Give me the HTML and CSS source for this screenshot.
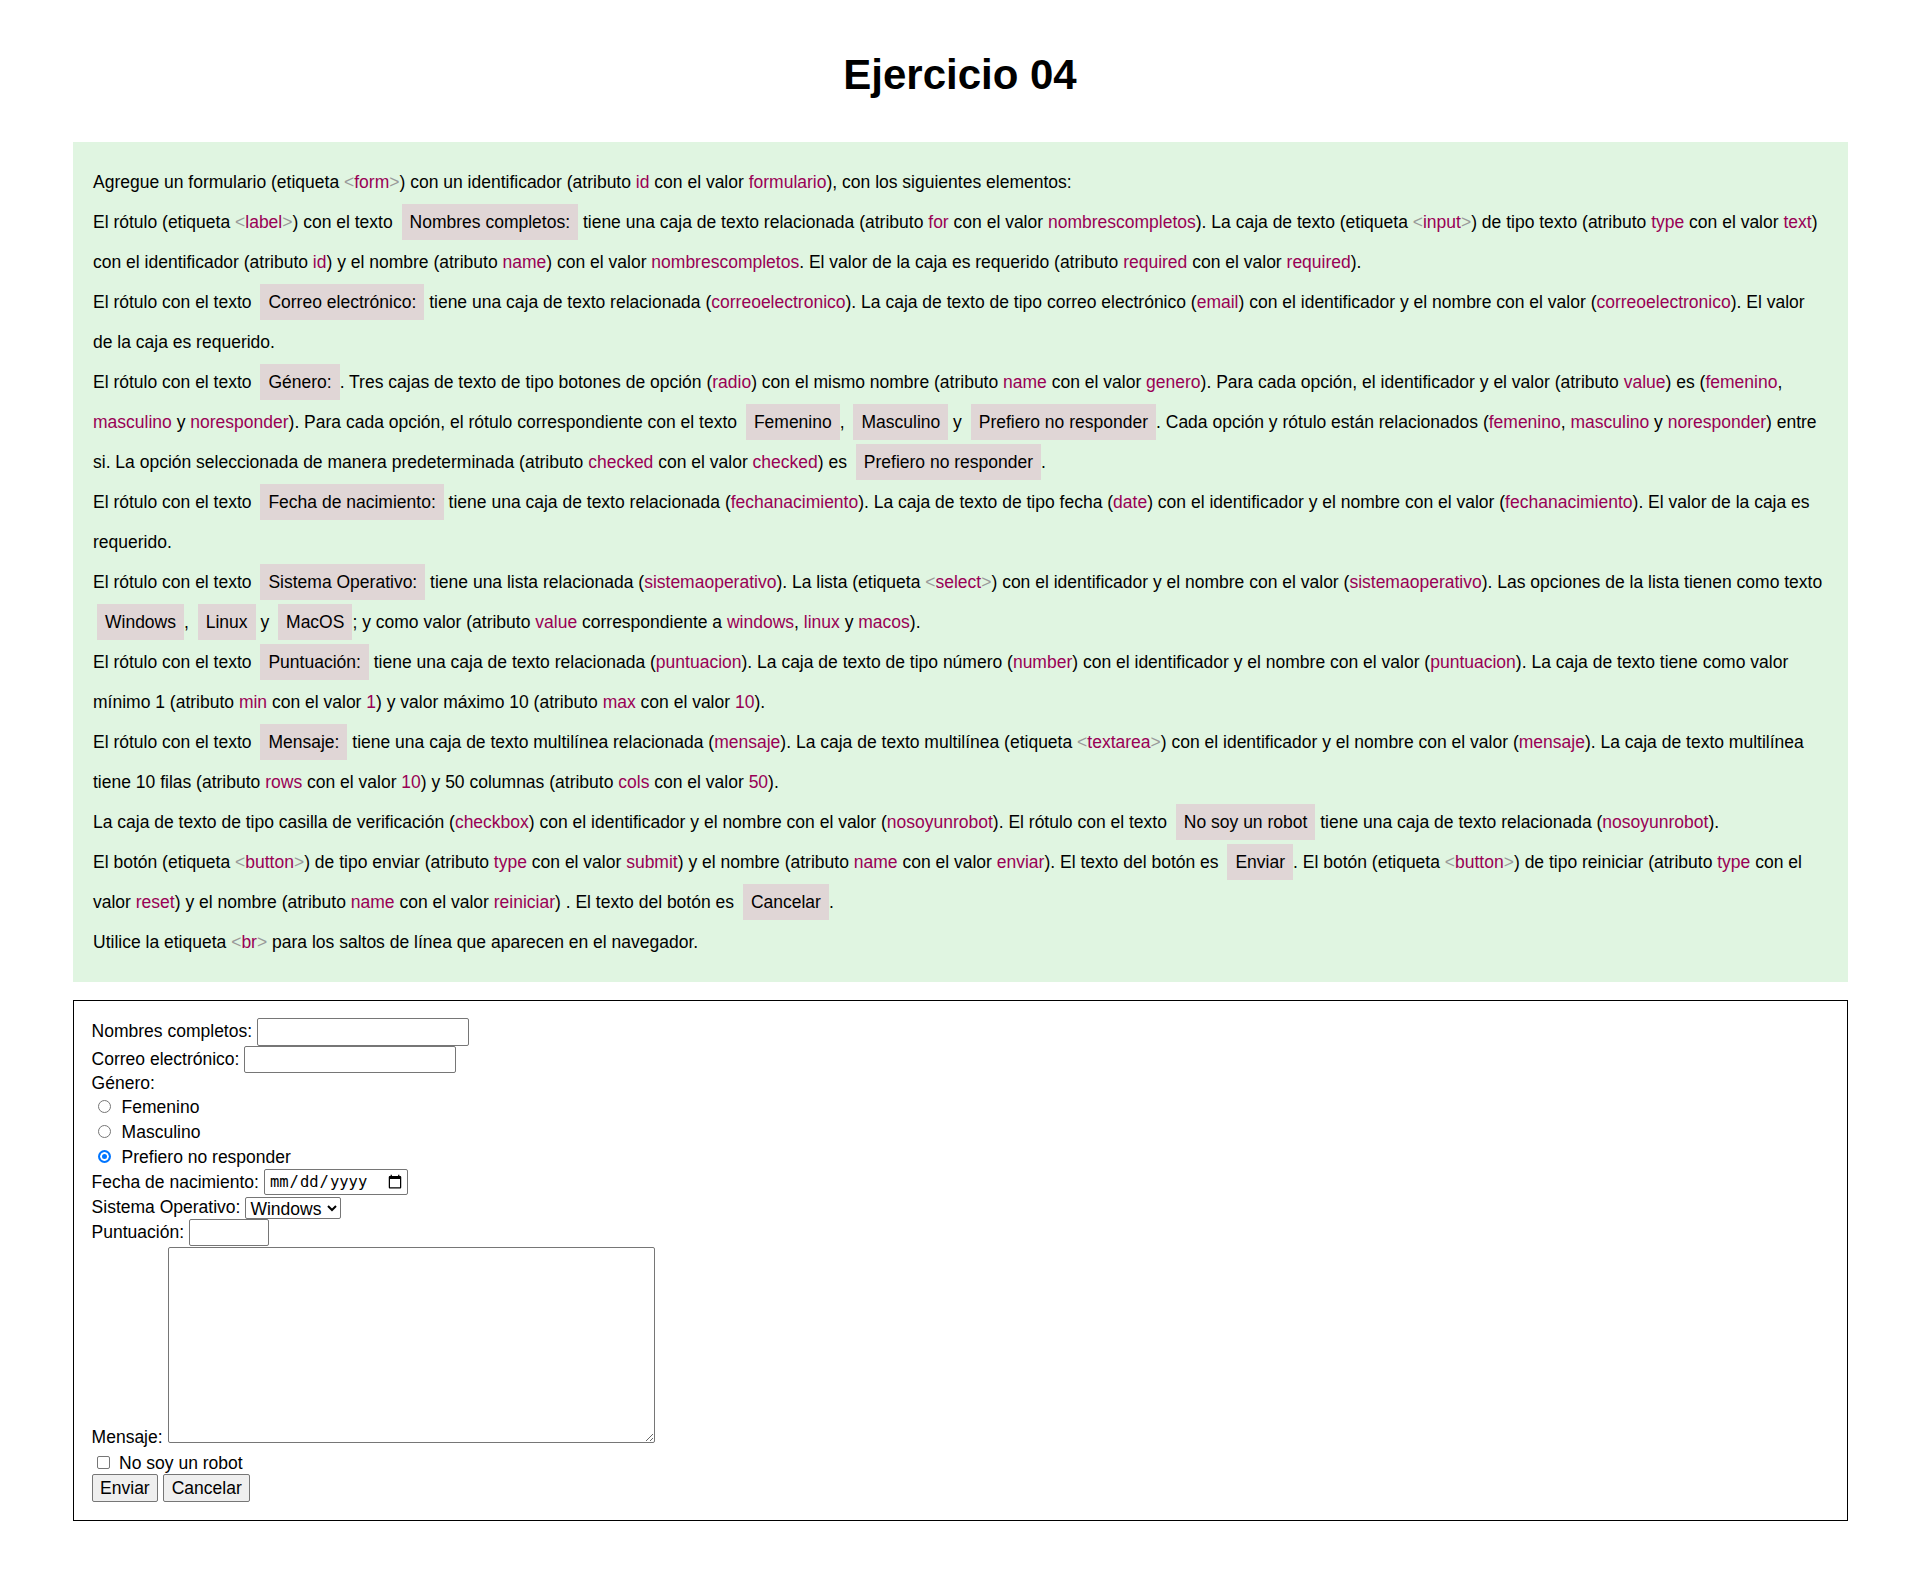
FILE: index.html
```html
<!DOCTYPE html>
<html lang="es">
<head>
<meta charset="utf-8">
<title>Ejercicio 04</title>
<link rel="stylesheet" href="styles.css">
</head>
<body>
<h1 class="title">Ejercicio 04</h1>
<div class="wrap">
  <section class="enunciado">
    <p>Agregue un formulario (etiqueta <span class="p">&lt;</span><span class="k">form</span><span class="p">&gt;</span>) con un identificador (atributo <span class="k">id</span> con el valor <span class="k">formulario</span>), con los siguientes elementos:</p>
    <p>El rótulo (etiqueta <span class="p">&lt;</span><span class="k">label</span><span class="p">&gt;</span>) con el texto <span class="box">Nombres completos:</span> tiene una caja de texto relacionada (atributo <span class="k">for</span> con el valor <span class="k">nombrescompletos</span>). La caja de texto (etiqueta <span class="p">&lt;</span><span class="k">input</span><span class="p">&gt;</span>) de tipo texto (atributo <span class="k">type</span> con el valor <span class="k">text</span>) con el identificador (atributo <span class="k">id</span>) y el nombre (atributo <span class="k">name</span>) con el valor <span class="k">nombrescompletos</span>. El valor de la caja es requerido (atributo <span class="k">required</span> con el valor <span class="k">required</span>).</p>
    <p>El rótulo con el texto <span class="box">Correo electrónico:</span> tiene una caja de texto relacionada (<span class="k">correoelectronico</span>). La caja de texto de tipo correo electrónico (<span class="k">email</span>) con el identificador y el nombre con el valor (<span class="k">correoelectronico</span>). El valor de la caja es requerido.</p>
    <p>El rótulo con el texto <span class="box">Género:</span>. Tres cajas de texto de tipo botones de opción (<span class="k">radio</span>) con el mismo nombre (atributo <span class="k">name</span> con el valor <span class="k">genero</span>). Para cada opción, el identificador y el valor (atributo <span class="k">value</span>) es (<span class="k">femenino</span>, <span class="k">masculino</span> y <span class="k">noresponder</span>). Para cada opción, el rótulo correspondiente con el texto <span class="box">Femenino</span>, <span class="box">Masculino</span> y <span class="box">Prefiero no responder</span>. Cada opción y rótulo están relacionados (<span class="k">femenino</span>, <span class="k">masculino</span> y <span class="k">noresponder</span>) entre si. La opción seleccionada de manera predeterminada (atributo <span class="k">checked</span> con el valor <span class="k">checked</span>) es <span class="box">Prefiero no responder</span>.</p>
    <p>El rótulo con el texto <span class="box">Fecha de nacimiento:</span> tiene una caja de texto relacionada (<span class="k">fechanacimiento</span>). La caja de texto de tipo fecha (<span class="k">date</span>) con el identificador y el nombre con el valor (<span class="k">fechanacimiento</span>). El valor de la caja es requerido.</p>
    <p>El rótulo con el texto <span class="box">Sistema Operativo:</span> tiene una lista relacionada (<span class="k">sistemaoperativo</span>). La lista (etiqueta <span class="p">&lt;</span><span class="k">select</span><span class="p">&gt;</span>) con el identificador y el nombre con el valor (<span class="k">sistemaoperativo</span>). Las opciones de la lista tienen como texto <span class="box">Windows</span>, <span class="box">Linux</span> y <span class="box">MacOS</span>; y como valor (atributo <span class="k">value</span> correspondiente a <span class="k">windows</span>, <span class="k">linux</span> y <span class="k">macos</span>).</p>
    <p>El rótulo con el texto <span class="box">Puntuación:</span> tiene una caja de texto relacionada (<span class="k">puntuacion</span>). La caja de texto de tipo número (<span class="k">number</span>) con el identificador y el nombre con el valor (<span class="k">puntuacion</span>). La caja de texto tiene como valor mínimo 1 (atributo <span class="k">min</span> con el valor <span class="k">1</span>) y valor máximo 10 (atributo <span class="k">max</span> con el valor <span class="k">10</span>).</p>
    <p>El rótulo con el texto <span class="box">Mensaje:</span> tiene una caja de texto multilínea relacionada (<span class="k">mensaje</span>). La caja de texto multilínea (etiqueta <span class="p">&lt;</span><span class="k">textarea</span><span class="p">&gt;</span>) con el identificador y el nombre con el valor (<span class="k">mensaje</span>). La caja de texto multilínea tiene 10 filas (atributo <span class="k">rows</span> con el valor <span class="k">10</span>) y 50 columnas (atributo <span class="k">cols</span> con el valor <span class="k">50</span>).</p>
    <p>La caja de texto de tipo casilla de verificación (<span class="k">checkbox</span>) con el identificador y el nombre con el valor (<span class="k">nosoyunrobot</span>). El rótulo con el texto <span class="box">No soy un robot</span> tiene una caja de texto relacionada (<span class="k">nosoyunrobot</span>).</p>
    <p>El botón (etiqueta <span class="p">&lt;</span><span class="k">button</span><span class="p">&gt;</span>) de tipo enviar (atributo <span class="k">type</span> con el valor <span class="k">submit</span>) y el nombre (atributo <span class="k">name</span> con el valor <span class="k">enviar</span>). El texto del botón es <span class="box">Enviar</span>. El botón (etiqueta <span class="p">&lt;</span><span class="k">button</span><span class="p">&gt;</span>) de tipo reiniciar (atributo <span class="k">type</span> con el valor <span class="k">reset</span>) y el nombre (atributo <span class="k">name</span> con el valor <span class="k">reiniciar</span>) . El texto del botón es <span class="box">Cancelar</span>.</p>
    <p>Utilice la etiqueta <span class="p">&lt;</span><span class="k">br</span><span class="p">&gt;</span> para los saltos de línea que aparecen en el navegador.</p>
  </section>

  <form class="form" id="formulario">
    <div class="row row-txt">
      <label for="nombrescompletos">Nombres completos:</label>
      <input class="txt" type="text" id="nombrescompletos" name="nombrescompletos">
    </div>
    <div class="row row-txt">
      <label for="correoelectronico">Correo electrónico:</label>
      <input class="txt" type="email" id="correoelectronico" name="correoelectronico">
    </div>
    <div class="row row-plain">Género:</div>
    <div class="row row-opt">
      <input class="radio" type="radio" id="femenino" name="genero" value="femenino">
      <label for="femenino">Femenino</label>
    </div>
    <div class="row row-opt">
      <input class="radio" type="radio" id="masculino" name="genero" value="masculino">
      <label for="masculino">Masculino</label>
    </div>
    <div class="row row-opt">
      <input class="radio" type="radio" id="noresponder" name="genero" value="noresponder" checked>
      <label for="noresponder">Prefiero no responder</label>
    </div>
    <div class="row row-date">
      <label for="fechanacimiento">Fecha de nacimiento:</label>
      <input class="date" type="date" id="fechanacimiento" name="fechanacimiento">
    </div>
    <div class="row row-sel">
      <label for="sistemaoperativo">Sistema Operativo:</label>
      <select class="sel" id="sistemaoperativo" name="sistemaoperativo">
        <option value="windows">Windows</option>
        <option value="linux">Linux</option>
        <option value="macos">MacOS</option>
      </select>
    </div>
    <div class="row row-num">
      <label for="puntuacion">Puntuación:</label>
      <input class="num" type="number" id="puntuacion" name="puntuacion" min="1" max="10">
    </div>
    <div class="row row-area">
      <label for="mensaje">Mensaje:</label>
      <textarea class="area" id="mensaje" name="mensaje" rows="10" cols="50"></textarea>
    </div>
    <div class="row row-chk">
      <input class="chk" type="checkbox" id="nosoyunrobot" name="nosoyunrobot">
      <label for="nosoyunrobot">No soy un robot</label>
    </div>
    <div class="row row-btn">
      <button class="btn" type="submit" name="enviar">Enviar</button>
      <button class="btn" type="reset" name="reiniciar">Cancelar</button>
    </div>
  </form>
</div>
</body>
</html>
```

FILE: styles.css
```css
html, body {
  margin: 0;
  padding: 0;
  background: #ffffff;
}

body {
  font-family: "Liberation Sans", Arial, sans-serif;
  font-size: 17.5px;
  color: #000000;
}

.title {
  margin: 51px 0 44px;
  text-align: center;
  font-size: 42px;
  line-height: 47px;
  font-weight: bold;
}

.wrap {
  width: 1775px;
  margin-left: 73px;
}

.enunciado {
  background: #e0f5e1;
  padding: 20px;
}

.enunciado p {
  margin: 0;
  line-height: 40px;
}

.k {
  color: #990055;
}

.p {
  color: #999999;
}

.box {
  display: inline-block;
  line-height: 20px;
  padding: 8px;
  margin-left: 4px;
  background: #e0d6d6;
}

/* form */
.form {
  margin-top: 17.6px;
  border: 1px solid #000000;
  padding: 17.6px;
}

.row {
  display: flex;
  align-items: center;
  gap: 5px;
}

.row-txt { height: 27.5px; }
.row-plain { height: 20px; }
.row-opt { height: 25px; align-items: flex-end; gap: 0; }
.row-date { height: 28px; }
.row-sel { height: 23px; }
.row-num { height: 27px; }
.row-area { height: 202px; align-items: flex-end; }
.row-chk { height: 26px; align-items: flex-end; gap: 0; }
.row-btn { height: 28px; }

.txt,
.num,
.date,
.area {
  box-sizing: border-box;
  margin: 0;
  border: 1px solid #767676;
  border-radius: 2px;
  background: #ffffff;
  padding: 1px 2px;
}

.txt {
  width: 212px;
  height: 27.5px;
  font: inherit;
}

.num {
  width: 80px;
  height: 27px;
  font: inherit;
}

.date {
  width: 144px;
  height: 26px;
  font-family: "DejaVu Sans Mono", "Liberation Mono", monospace;
  font-size: 15.5px;
  color: #000000;
  padding-left: 4px;
}

.sel {
  box-sizing: border-box;
  width: 96px;
  height: 22px;
  margin: 0;
  font: inherit;
  color: #000000;
  border: 1px solid #767676;
  border-radius: 2px;
  background: #ffffff;
}

.area {
  width: 487px;
  height: 196px;
  margin-bottom: 5px;
  font: inherit;
}

.radio,
.chk {
  -webkit-appearance: none;
  appearance: none;
  box-sizing: border-box;
  flex: none;
  width: 13px;
  height: 13px;
  background: #ffffff;
  border: 1px solid #767676;
}

.radio {
  border-radius: 50%;
  margin: 0 11px 5px 6px;
}

.radio:checked {
  border: 2px solid #0075ff;
  background: #0075ff;
  box-shadow: inset 0 0 0 2px #ffffff;
}

.chk {
  border-radius: 2px;
  margin: 0 9.5px 5px 5px;
}

.btn {
  box-sizing: border-box;
  height: 28px;
  margin: 0;
  padding: 0 7.5px;
  font: inherit;
  color: #000000;
  background: #efefef;
  border: 1px solid #767676;
  border-radius: 2px;
}
```
